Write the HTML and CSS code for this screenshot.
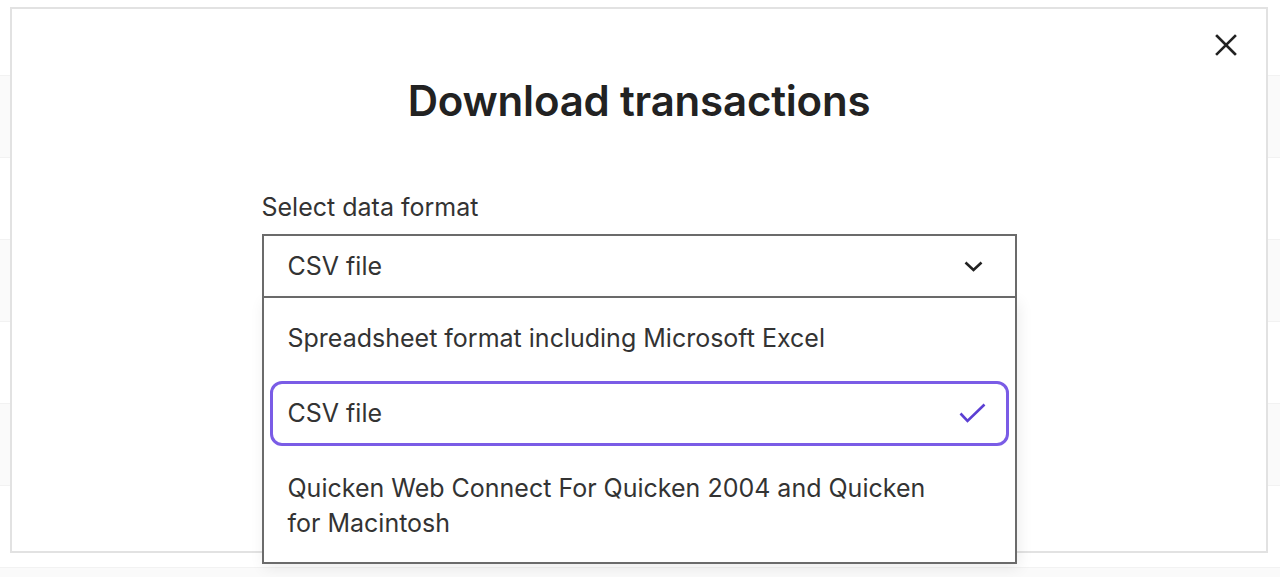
FILE: index.html
```html
<!DOCTYPE html>
<html lang="en">
<head>
    <meta charset="UTF-8">
    <meta name="viewport" content="width=device-width, initial-scale=1.0">
    <title>Download transactions</title>
    <link rel="stylesheet" href="styles.css">
</head>
<body>

<div class="page">
    <div class="row"></div>
    <div class="row shaded"></div>
    <div class="row"></div>
    <div class="row shaded"></div>
    <div class="row"></div>
    <div class="row shaded"></div>
    <div class="row"></div>
    <div class="row shaded last"></div>
</div>

<div class="modal">
    <button class="close-btn" aria-label="Close">
        <svg width="22" height="22" viewBox="0 0 22 22">
            <path d="M2 2 L20 20 M20 2 L2 20" stroke="#222" stroke-width="2.6" stroke-linecap="square" fill="none"/>
        </svg>
    </button>

    <h2 class="title">Download transactions</h2>

    <div class="field">
        <label class="field-label">Select data format</label>
        <div class="select-wrap">
            <div class="select">
                <span>CSV file</span>
                <svg class="chevron" width="19" height="11" viewBox="0 0 19 11">
                    <path d="M1.5 1.5 L9.5 9 L17.5 1.5" stroke="#222" stroke-width="2.6" fill="none"/>
                </svg>
            </div>
            <ul class="options">
                <li class="option">
                    <span class="option-text">Spreadsheet format including Microsoft Excel</span>
                    <span class="check"></span>
                </li>
                <li class="option selected">
                    <span class="option-text">CSV file</span>
                    <span class="check">
                        <svg width="27" height="21" viewBox="0 0 27 21">
                            <path d="M1.5 10.5 L8.5 18 L25.5 1.5" stroke="#5b3fd3" stroke-width="2.6" fill="none"/>
                        </svg>
                    </span>
                </li>
                <li class="option">
                    <span class="option-text">Quicken Web Connect For Quicken 2004 and Quicken for Macintosh</span>
                    <span class="check"></span>
                </li>
            </ul>
        </div>
    </div>
</div>

</body>
</html>
```

FILE: styles.css
```css
* {
    box-sizing: border-box;
}
body {
    margin: 0;
    font-family: Inter, "Noto Sans", sans-serif;
    color: #2b2b2b;
    background: #fafafa;
    height: 577px;
    overflow: hidden;
}
.row {
    height: 82px;
    background: #fff;
    border-top: 1px solid #f2f2f2;
}
.row:first-child {
    height: 75px;
    border-top: none;
}
.row.shaded {
    background: #fafafa;
}
.row.last {
    height: 12px;
}
.modal {
    position: absolute;
    left: 10px;
    top: 7px;
    width: 1258px;
    height: 546px;
    background: #fff;
    border: 2px solid #e2e2e2;
    padding-top: 68px;
}
.close-btn {
    position: absolute;
    top: 23px;
    right: 27px;
    width: 26px;
    height: 26px;
    padding: 2px;
    border: none;
    background: none;
    cursor: pointer;
}
.title {
    margin: 0;
    text-align: center;
    font-size: 42px;
    line-height: 48px;
    font-weight: 600;
    color: #222;
    letter-spacing: -0.2px;
}
.field {
    width: 755px;
    margin: 68px auto 0;
}
.field-label {
    display: block;
    font-size: 25px;
    line-height: 28px;
    color: #333;
    margin-bottom: 13px;
}
.select-wrap {
    position: relative;
}
.select {
    height: 64px;
    display: flex;
    align-items: center;
    justify-content: space-between;
    padding: 0 32px 0 24px;
    border: 2px solid #6b6b6b;
    font-size: 25px;
    color: #333;
}
.chevron {
    display: block;
}
.options {
    position: absolute;
    top: 100%;
    left: 0;
    right: 0;
    height: 266px;
    margin: 0;
    padding: 8px 6px;
    list-style: none;
    background: #fff;
    border: 2px solid #6b6b6b;
    border-top: none;
    box-shadow: 2px 4px 14px rgba(0, 0, 0, 0.08);
    display: flex;
    flex-direction: column;
    gap: 10px;
}
.option {
    display: flex;
    align-items: flex-start;
    padding: 12px 20px 12px 15px;
    border: 3px solid transparent;
    border-radius: 12px;
    font-size: 25px;
    line-height: 35px;
    color: #333;
}
.option.selected {
    border-color: #7a5ce6;
}
.option-text {
    flex: 1;
}
.check {
    width: 27px;
    margin-left: 24px;
    align-self: center;
    display: flex;
}
```
